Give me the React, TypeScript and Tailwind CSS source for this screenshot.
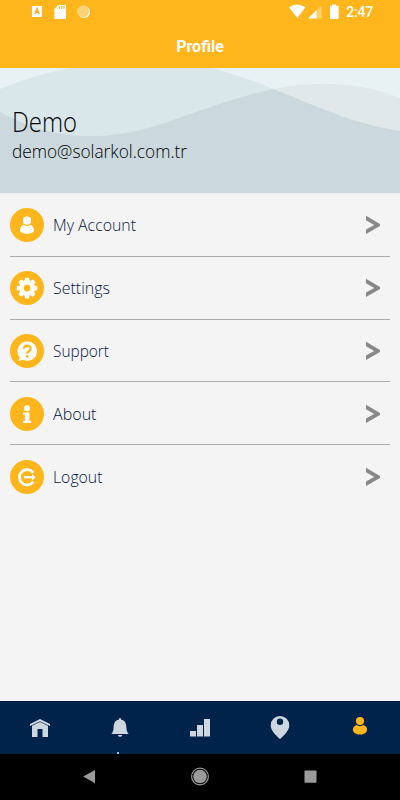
import React from "react";

function Glyph({ name }: { name: string }) {
  return (
    <svg viewBox="0 0 34 34" className="block size-[34px] shrink-0">
      <circle cx="17" cy="17" r="17" fill="#ffb61d" />
      {name === "My Account" && (
        <g fill="#fff">
          <circle cx="17" cy="12.7" r="4.1" />
          <path d="M13.5 16.7c2 1.6 5 1.6 7 0 2.1 1 3.5 3.2 3.5 5.2 0 2.5-3 3.8-7 3.8s-7-1.3-7-3.8c0-2 1.4-4.2 3.5-5.2z" />
        </g>
      )}
      {name === "Settings" && (
        <g fill="#fff">
          {[0, 45, 90, 135].map((a) => (
            <rect key={a} x="14.7" y="6.8" width="4.6" height="20.6" rx="1.2" transform={`rotate(${a} 17 17.1)`} />
          ))}
          <circle cx="17" cy="17.1" r="8" />
          <circle cx="17" cy="17.1" r="3.4" fill="#ffb61d" />
        </g>
      )}
      {name === "Support" && (
        <g>
          <path d="M17.2 7.4a9.7 9.7 0 1 1-4.6 18.2c-1.4 1-3 1.3-4.7 1 1-.8 1.7-2 1.8-3.3A9.7 9.7 0 0 1 17.2 7.4z" fill="#fff" />
          <path d="M13.8 14.8c.1-4 6.8-4.1 6.8-.2 0 2.8-3.3 2.4-3.3 5.1" fill="none" stroke="#ffb61d" strokeWidth="2.3" />
          <circle cx="17.2" cy="22.4" r="1.45" fill="#ffb61d" />
        </g>
      )}
      {name === "About" && (
        <g fill="#fff">
          <circle cx="17" cy="11.3" r="3" />
          <path d="M13.1 15.4h6.3v8.4h1.7v2.2h-8v-2.2h1.8v-6.2h-1.8z" />
        </g>
      )}
      {name === "Logout" && (
        <g fill="none" stroke="#fff" strokeWidth="2.8">
          <path d="M23.4 12.7a7.7 7.7 0 1 0 0 9" />
          <path d="M14 17.2h9" strokeWidth="2.2" />
          <path d="M22 14l3.600 3.200-3.600 3.200z" fill="#fff" stroke="none" />
        </g>
      )}
    </svg>
  );
}

const rows = [
  { label: "My Account", box: "h-16 border-b", text: "mt-[3px]", width: 83 },
  { label: "Settings", box: "h-[63px] border-b", text: "mt-px", width: 57 },
  { label: "Support", box: "h-[62px] border-b", text: "mt-[3px]", width: 56 },
  { label: "About", box: "h-[63px] border-b pt-px", text: "mt-[2px]", width: 43.5 },
  { label: "Logout", box: "h-[63px]", text: "mt-[3px]", width: 49.5 },
];

function FitText({ text, width, size }: { text: string; width: number; size: number }) {
  return (
    <svg width={width + 4} height={size * 1.5} className="block overflow-visible">
      <text x="0" y={size * 1.08} fontSize={size} textLength={width} lengthAdjust="spacingAndGlyphs" fill="currentColor">
        {text}
      </text>
    </svg>
  );
}

export default function App() {
  return (
    <div className="flex h-[800px] w-[400px] flex-col overflow-hidden bg-[#f4f4f4] font-['Open_Sans','Noto_Sans',sans-serif] font-light">
      <header className="h-[68px] shrink-0 bg-[#ffb61d] font-['Roboto',sans-serif] text-white">
        <div className="flex h-6 items-center justify-between pr-[27px] pl-8">
          <svg width="60" height="24" viewBox="32 0 60 24">
            <rect x="32" y="6" width="10" height="11" rx=".5" fill="#fff" />
            <path d="M34.8 14l2.2-5.3L39.2 14M35.6 12.3h2.8" fill="none" stroke="#f5ad20" strokeWidth="1.4" />
            <path d="M58.4 5H65q1 0 1 1v12q0 1-1 1H55.400q-1 0-1-1V9z" fill="#fff" />
            <path d="M59.500 6v3M61.700 6v3M63.900 6v3" stroke="#ffb61d" strokeWidth="1.1" />
            <circle cx="84" cy="12" r="6" fill="#fff" />
            <circle cx="83" cy="11.200" r="6" fill="#ffd375" />
          </svg>
          <div className="flex h-6 items-center">
            <svg width="57" height="24" viewBox="289 0 57 24" fill="#fff">
              <path d="M289 7.300q8.300-5.600 16.500 0L297.200 18z" />
              <path d="M321.500 5.300v13.200h-13.400z" opacity=".35" />
              <path d="M316.500 10.300v8.200h-8.400z" />
              <path d="M332 4.500h4v1.300h2q.7 0 .7.700v11.600q0 .8-.7.800h-7.200q-.8 0-.8-.8V6.500q0-.7.800-.7h1.200z" />
            </svg>
            <span className="text-[14px] leading-6 font-medium tracking-[-0.2px]">2:47</span>
          </div>
        </div>
        <h1 className="pt-[11px] text-center text-[16px] leading-6 font-bold">Profile</h1>
      </header>

      <section className="relative h-[125px] shrink-0 bg-[#e8f1f3]">
        <svg className="absolute inset-0" width="400" height="125" viewBox="0 68 400 125">
          <path d="M274 89C291 85 309 84 326 84Q365 84 400 98V193H274z" fill="#e0e8ea" />
          <path d="M0 89Q36 74 72 68H212C234 74 254 81 274 89V193H0z" fill="#d9e6ea" />
          <path d="M0 112C30 128 55 136 94 136C153 136 196 106 274 89C320 108 355 124 400 131V193H0z" fill="#cbd9de" />
        </svg>
        <div className="relative pt-[35px] pl-3 text-black">
          <div className="h-[34px]"><FitText text="Demo" width={65} size={27} /></div>
          <FitText text="demo@solarkol.com.tr" width={175} size={19} />
        </div>
      </section>

      <main className="flex-1 px-[10px]">
        {rows.map((row) => (
          <div key={row.label} className={`flex items-center border-[#aaacae] pr-[10px] ${row.box}`}>
            <Glyph name={row.label} />
            <div className={`ml-[9px] flex-1 text-[#07143d] ${row.text}`}>
              <FitText text={row.label} width={row.width} size={17} />
            </div>
            <svg width="14" height="20" viewBox="0 0 14 20">
              <path d="M0 .8L14 8.900v2L0 19.100v-4.500L8.200 9.900 0 5.200z" fill="#888" />
            </svg>
          </div>
        ))}
      </main>

      <nav className="h-[53px] shrink-0 border-t border-[#001a3e] bg-[#00234c]">
        <svg width="400" height="52" viewBox="0 702 400 52" fill="#ced6df">
          <path d="M30 724l10-5 10 5v2l-2-.8V737h-5.500v-8h-5v8H32v-11.800l-2 .8z" />
          <path d="M31 726l9-4.300 9 4.300" fill="none" stroke="#00234c" strokeWidth=".7" />
          <path d="M119 718.300h2v1.200c4 .8 5.300 4 5.400 8 .1 3 .7 5 2.300 6.500h-17.400c1.600-1.500 2.200-3.500 2.300-6.500.1-4 1.400-7.200 5.400-8zM118 735h4.200c0 2.400-4.200 2.400-4.200 0zM117.200 752h1.700v2h-1.700z" />
          <path d="M190 731h6v5.500h-6zM197 725h6v11.500h-6zM204 719h6v17.500h-6z" />
          <path fillRule="evenodd" d="M280 716a9.300 9.300 0 0 1 9.300 9.500c0 4.500-4.600 9.500-9.300 13.500-4.700-4-9.300-9-9.300-13.500A9.300 9.300 0 0 1 280 716zm0 2.600a3.200 3.200 0 1 0 0 6.400 3.200 3.200 0 0 0 0-6.400z" />
          <g fill="#ffb61d">
            <circle cx="360" cy="721" r="4.100" />
            <path d="M356.500 725c2 1.500 5 1.500 7 0 2.200.8 3.600 2.500 3.600 4.500 0 3.300-3.200 5-7.100 5s-7.100-1.700-7.100-5c0-2 1.400-3.700 3.600-4.500z" />
          </g>
        </svg>
      </nav>
      <footer className="h-[46px] shrink-0 bg-black">
        <svg width="400" height="46" viewBox="0 754 400 46" fill="#9b9b9b">
          <path d="M95 770v13.200l-11.800-6.600z" />
          <circle cx="200" cy="776.500" r="6.800" />
          <circle cx="200" cy="776.500" r="8.400" fill="none" stroke="#9b9b9b" strokeWidth="1.200" />
          <rect x="304.500" y="770.500" width="12" height="12.300" rx=".8" />
        </svg>
      </footer>
    </div>
  );
}
